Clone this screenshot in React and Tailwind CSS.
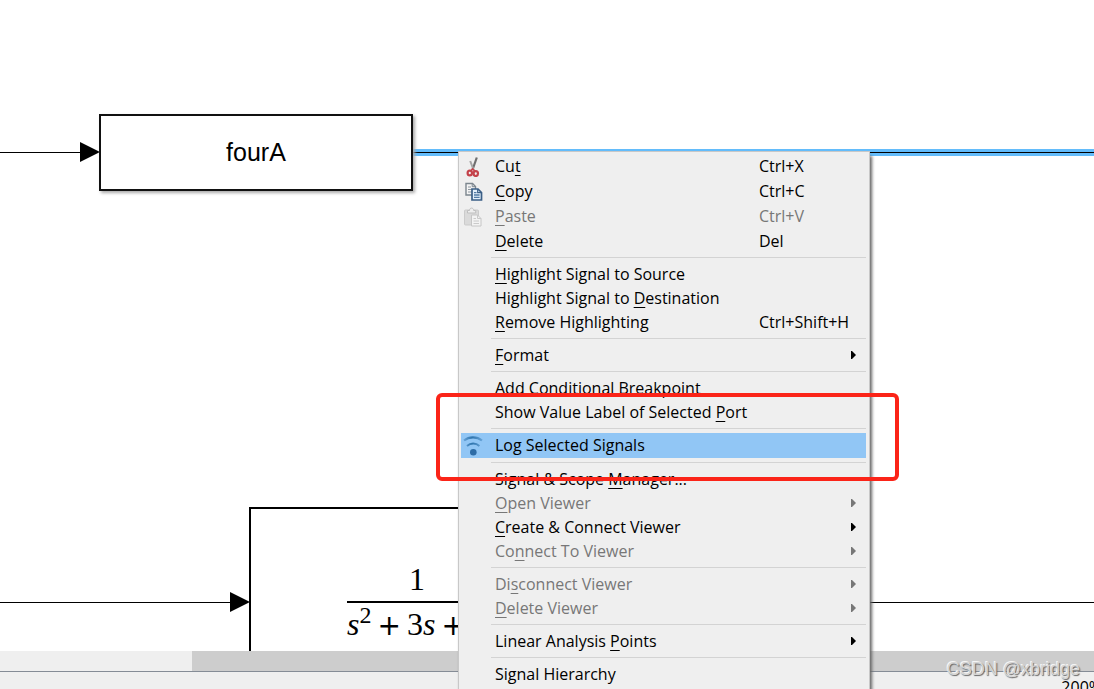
import { clsx } from 'clsx';

const MENU_GROUPS = [
  [
    { label: 'Cut', key: 2, shortcut: 'Ctrl+X', icon: 'cut' },
    { label: 'Copy', key: 0, shortcut: 'Ctrl+C', icon: 'copy' },
    { label: 'Paste', key: 0, shortcut: 'Ctrl+V', icon: 'paste', disabled: true },
    { label: 'Delete', key: 0, shortcut: 'Del' },
  ],
  [
    { label: 'Highlight Signal to Source', key: 0 },
    { label: 'Highlight Signal to Destination', key: 20 },
    { label: 'Remove Highlighting', key: 0, shortcut: 'Ctrl+Shift+H' },
  ],
  [{ label: 'Format', key: 0, submenu: true }],
  [
    { label: 'Add Conditional Breakpoint' },
    { label: 'Show Value Label of Selected Port', key: 29 },
  ],
  [{ label: 'Log Selected Signals', icon: 'log', active: true }],
  [
    { label: 'Signal & Scope Manager...', key: 15 },
    { label: 'Open Viewer', key: 0, submenu: true, disabled: true },
    { label: 'Create & Connect Viewer', key: 0, submenu: true },
    { label: 'Connect To Viewer', key: 2, submenu: true, disabled: true },
  ],
  [
    { label: 'Disconnect Viewer', key: 2, submenu: true, disabled: true },
    { label: 'Delete Viewer', key: 0, submenu: true, disabled: true },
  ],
  [{ label: 'Linear Analysis Points', key: 16, submenu: true }],
  [{ label: 'Signal Hierarchy' }],
];

function CutIcon() {
  return (
    <svg width="20" height="20" viewBox="0 0 20 20" fill="none">
      <path d="M13.8 0.5L9.6 12.5" stroke="#6f6f6f" strokeWidth="2.2" />
      <path d="M7.2 4L10.6 13" stroke="#a5a5a5" strokeWidth="2" />
      <ellipse cx="6.8" cy="16" rx="2.2" ry="2.4" stroke="#c4424a" strokeWidth="2.2" />
      <ellipse cx="12.8" cy="16.6" rx="2.2" ry="2.4" stroke="#c4424a" strokeWidth="2.2" />
      <path d="M8 13.8L9.6 12l2.4 2.2" stroke="#c4424a" strokeWidth="1.6" />
    </svg>
  );
}

function CopyIcon() {
  return (
    <svg width="20" height="20" viewBox="0 0 20 20">
      <path d="M3 1.5h6.5l3 3V13H3z" fill="#f4f4f4" stroke="#7c868e" strokeWidth="1.4" />
      <path d="M9.2 1.5v3.2h3.3" fill="none" stroke="#7c868e" />
      <path d="M5 5h3M5 7.5h5M5 10h5" stroke="#8e989f" strokeWidth="1.2" />
      <path d="M9 7h6l3.5 3.5V18H9z" fill="#e4f0fb" stroke="#3b5f86" strokeWidth="1.7" />
      <path d="M14.7 7v3.7h3.8" fill="none" stroke="#3b5f86" strokeWidth="1.2" />
      <path d="M11 10.7h2.5M11 13h5.6M11 15.4h5.6" stroke="#527ba5" strokeWidth="1.3" />
    </svg>
  );
}

function PasteIcon() {
  return (
    <svg width="20" height="20" viewBox="0 0 20 20">
      <rect x="1.5" y="3" width="14" height="15" rx="1" fill="#dadada" stroke="#cbcbcb" />
      <path d="M4.5 6V3.5h2C6.5.3 10.7.3 10.7 3.5h2V6z" fill="#eee" stroke="#bfbfbf" />
      <path d="M8.5 8h6l3.5 3.5V19H8.5z" fill="#f3f3f3" stroke="#c6c6c6" />
      <path d="M14.5 8v3.5H18M10.5 11.5H13M10.5 14H16M10.5 16.5H16" fill="none" stroke="#cacaca" />
    </svg>
  );
}

function LogIcon() {
  return (
    <svg width="20" height="22" viewBox="0 0 20 22" fill="none">
      <defs>
        <linearGradient id="wave" gradientUnits="userSpaceOnUse" x1="0" y1="0" x2="20" y2="0">
          <stop offset="0" stopColor="#6aa6da" />
          <stop offset="0.45" stopColor="#2f75ae" />
          <stop offset="1" stopColor="#6aa6da" />
        </linearGradient>
      </defs>
      <path d="M1 5.5C6 1.2 14 1.2 19 5.5" stroke="url(#wave)" strokeWidth="2.2" />
      <path d="M4 11c3.4-3.3 9-3.3 12.4 0" stroke="url(#wave)" strokeWidth="2" />
      <circle cx="10.3" cy="17.2" r="3.3" fill="#2d6ca6" />
    </svg>
  );
}

const ICONS = { cut: CutIcon, copy: CopyIcon, paste: PasteIcon, log: LogIcon };

function Label({ text, mnemonic }) {
  if (mnemonic === undefined) return text;
  return (
    <>
      {text.slice(0, mnemonic)}
      <span className="underline decoration-1 underline-offset-3 [text-decoration-skip-ink:none]">{text[mnemonic]}</span>
      {text.slice(mnemonic + 1)}
    </>
  );
}

function MenuItem({ item }) {
  const Icon = ICONS[item.icon];
  return (
    <button
      role="menuitem"
      disabled={item.disabled}
      className={clsx(
        'flex w-full items-start text-left whitespace-nowrap',
        Icon ? 'h-[25px]' : 'h-6',
        item.disabled ? 'text-[#777]' : 'text-black',
        item.active && 'bg-[#91c6f5]',
      )}
    >
      <span className="flex h-full w-[34px] shrink-0 items-center pl-[2px]">{Icon && <Icon />}</span>
      <span className="flex-1">
        <Label text={item.label} mnemonic={item.key} />
      </span>
      {item.shortcut && <span className="w-[107px]">{item.shortcut}</span>}
      {item.submenu && (
        <svg width="5" height="8" viewBox="0 0 5 8" fill="currentColor" className="mr-[10px] self-center">
          <path d="M0 0h1l4 4-4 4H0z" />
        </svg>
      )}
    </button>
  );
}

function ContextMenu() {
  return (
    <div
      role="menu"
      className="absolute top-[151px] left-[458px] w-[412px] border border-[#c8c8c8] bg-[#efefef] pt-[2px] pr-[3px] pb-2 pl-[2px] text-base leading-6 shadow-[2px_5px_3px_#666]"
    >
      {MENU_GROUPS.map((group, i) => (
        <div key={group[0].label}>
          {i > 0 && <div role="separator" className="my-1 ml-[30px] h-px bg-[#d3d3d3]" />}
          {group.map((item) => (
            <MenuItem key={item.label} item={item} />
          ))}
        </div>
      ))}
    </div>
  );
}

function Wire({ className }) {
  return (
    <div className={clsx('absolute left-0 flex items-center', className)}>
      <div className="h-px flex-1 bg-black" />
      <svg width="20" height="20" viewBox="0 0 20 20">
        <path d="M0 0l20 10L0 20z" />
      </svg>
    </div>
  );
}

function Plus() {
  return <span className="font-['DejaVu_Sans',sans-serif] text-[28px]">+</span>;
}

function Diagram() {
  return (
    <main className="relative min-h-0 flex-1 overflow-hidden bg-white">
      <Wire className="top-[142px] w-[100px]" />
      <div className="absolute top-[149px] right-0 left-[413px] flex h-[7px] items-center bg-[#63bcfb]">
        <div className="h-px w-full bg-black" />
      </div>
      <div className="absolute top-[114px] left-[99px] flex h-[77px] w-[314px] items-center justify-center border-2 border-[#111] bg-white text-[25px] shadow-[2px_2px_3px_#aaa]">
        <span className="font-['Liberation_Sans',sans-serif]">fourA</span>
      </div>

      <Wire className="top-[592px] w-[250px]" />
      <div className="absolute top-[602px] right-0 left-[585px] h-px bg-black" />
      <div className="absolute top-[507px] left-[249px] flex h-[190px] w-[336px] items-center justify-center border-2 border-black bg-white font-['Liberation_Serif',serif] text-[32px] leading-9">
        <div className="w-[140px]">
          <div className="border-b-2 border-black pb-1 text-center">1</div>
          <div className="flex items-baseline gap-[6px] pt-[3px]">
            <span>
              <i>s</i>
              <sup className="-top-3 text-2xl leading-none">2</sup>
            </span>
            <Plus />
            <span>
              3<i>s</i>
            </span>
            <Plus />
          </div>
        </div>
      </div>
    </main>
  );
}

export default function App() {
  return (
    <div className="relative flex h-screen flex-col overflow-hidden bg-[#efefef] font-['Open_Sans','Noto_Sans',sans-serif]">
      <Diagram />
      <div className="flex h-5 bg-[#efefef]">
        <div className="ml-[192px] flex-1 bg-[#cdcdcd]" />
      </div>
      <footer className="flex h-[18px] justify-end border-t border-[#858c96] pt-[3px] text-base leading-6">
        <span className="-mr-2">200%</span>
      </footer>

      <ContextMenu />

      {/* callout around the log entry */}
      <div className="pointer-events-none absolute top-[393px] left-[436px] h-[88px] w-[463px] rounded-md border-4 border-[#fb2418]" />

      <div className="absolute right-[14px] bottom-[6px] font-['Liberation_Sans',sans-serif] text-lg leading-7 text-[#d5d5d5] [text-shadow:1px_1px_1px_#666,-1px_-1px_0_#f5f5f5]">
        CSDN @xbridge
      </div>
    </div>
  );
}
